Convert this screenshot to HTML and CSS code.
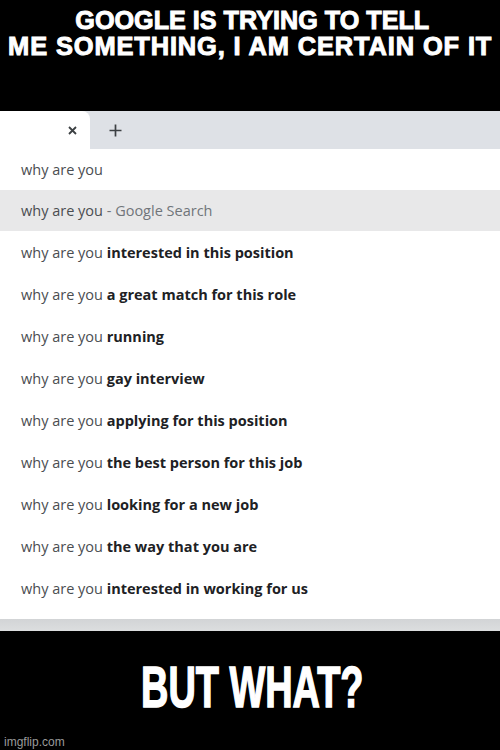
FILE: index.html
```html
<!DOCTYPE html>
<html>
<head>
<meta charset="utf-8">
<link rel="stylesheet" href="styles.css">
</head>
<body>
<div class="meme">
  <div class="cap-top">
    <div class="cap-line l1">GOOGLE IS TRYING TO TELL</div>
    <div class="cap-line l2">ME SOMETHING, I AM CERTAIN OF IT</div>
  </div>
  <div class="shot">
    <div class="tabbar">
      <div class="tab">
        <svg class="close" width="9" height="9" viewBox="0 0 9 9"><path d="M1 1L8 8M8 1L1 8" stroke="#3c4043" stroke-width="1.8" fill="none"/></svg>
      </div>
      <svg class="plus" width="13" height="13" viewBox="0 0 13 13"><path d="M6.5 0.5V12.5M0.5 6.5H12.5" stroke="#3c4043" stroke-width="1.7" fill="none"/></svg>
    </div>
    <div class="list">
      <div class="row r-first">why are you</div>
      <div class="row r-hl">why are you <span class="g">- Google Search</span></div>
      <div class="row">why are you <b>interested in this position</b></div>
      <div class="row">why are you <b>a great match for this role</b></div>
      <div class="row">why are you <b>running</b></div>
      <div class="row">why are you <b>gay interview</b></div>
      <div class="row">why are you <b>applying for this position</b></div>
      <div class="row">why are you <b>the best person for this job</b></div>
      <div class="row">why are you <b>looking for a new job</b></div>
      <div class="row">why are you <b>the way that you are</b></div>
      <div class="row">why are you <b>interested in working for us</b></div>
    </div>
    <div class="bottom-pad"></div>
    <div class="strip"></div>
  </div>
  <div class="cap-bottom">
    <div class="cap-big">BUT WHAT?</div>
    <div class="wm">imgflip.com</div>
  </div>
</div>
</body>
</html>
```
FILE: styles.css
```css
html, body { margin: 0; padding: 0; background: #000; }
.meme { width: 500px; height: 750px; background: #000; overflow: hidden; display: flex; flex-direction: column; }
.cap-top { height: 111px; display: flex; flex-direction: column; align-items: center; padding-top: 7px; box-sizing: border-box; }
.cap-line { font-family: "Liberation Sans", Arial, sans-serif; font-weight: bold; color: #fff; font-size: 26.5px; line-height: 26px; white-space: nowrap; -webkit-text-stroke: 1px #fff; }
.l1 { transform: scaleX(0.95); margin-left: 4px; }
.l2 { transform: scaleX(0.96); letter-spacing: 0.9px; }
.shot { background: #fff; display: flex; flex-direction: column; }
.tabbar { height: 38px; background: #dee1e6; display: flex; align-items: center; }
.tab { width: 90px; height: 38px; background: #fff; border-top-right-radius: 8px; display: flex; align-items: center; justify-content: flex-end; padding-right: 13px; box-sizing: border-box; }
.plus { margin-left: 19px; }
.list { display: flex; flex-direction: column; }
.row { height: 42px; display: flex; align-items: center; padding-left: 21px; font-family: "Open Sans", "Noto Sans", sans-serif; font-size: 14.5px; color: #4a4d51; white-space: pre; }
.row b { font-weight: bold; color: #202124; }
.r-first, .r-hl { height: 41px; }
.r-hl { background: #e8e8e9; }
.g { color: #70757a; }
.bottom-pad { height: 10px; }
.strip { height: 12px; background: linear-gradient(#d2d4d6, #dcdedf); }
.cap-bottom { flex: 1; position: relative; display: flex; justify-content: center; }
.cap-big { font-family: "Liberation Sans", Arial, sans-serif; font-weight: bold; color: #fff; font-size: 57px; line-height: 57px; margin-top: 28px; margin-left: 5px; white-space: nowrap; transform: scaleX(0.665); -webkit-text-stroke: 1.5px #fff; }
.wm { position: absolute; left: 4px; bottom: 1px; font-family: "Liberation Sans", sans-serif; font-size: 12px; color: #9a9a9a; }
```
